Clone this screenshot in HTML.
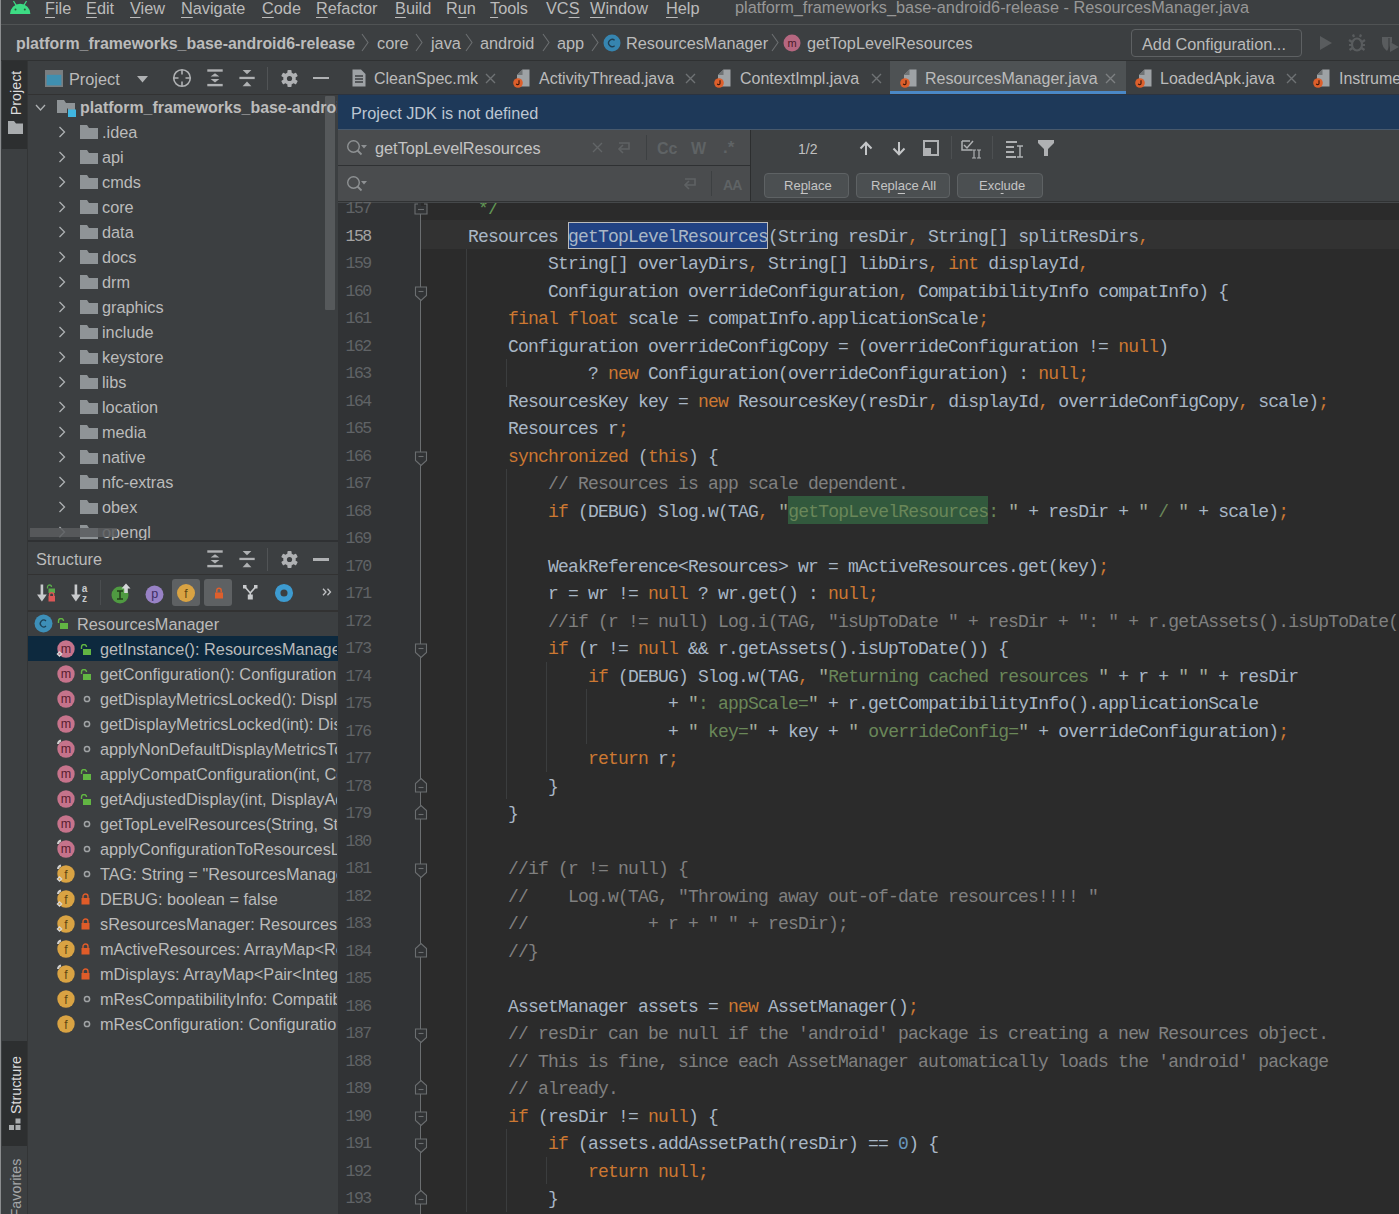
<!DOCTYPE html>
<html><head><meta charset="utf-8">
<style>
*{margin:0;padding:0;box-sizing:border-box}
html,body{width:1399px;height:1214px;overflow:hidden;background:#3c3f41}
body{position:relative;font-family:"Liberation Sans",sans-serif;font-size:16.3px;color:#bbbbbb}
.a{position:absolute}
.t{position:absolute;white-space:nowrap;margin-top:1.5px}
.mono{font-family:"Liberation Mono",monospace}
#menu .t{top:-4.5px;line-height:22px}
#menu u{text-decoration:underline;text-underline-offset:2.5px;text-decoration-thickness:1.2px}

.cl{position:absolute;left:8px;margin-top:2px;height:27.5px;line-height:27.5px;white-space:pre;font-family:"Liberation Mono",monospace;font-size:18px;letter-spacing:-0.8px;color:#a9b7c6}
.ln{position:absolute;right:50.5px;margin-top:1.2px;height:27.5px;line-height:27.5px;white-space:pre;font-family:"Liberation Mono",monospace;font-size:16.5px;letter-spacing:-1.6px;color:#606366;text-align:right}
.ln.cur{color:#a4a3a3}
.ig{position:absolute;width:1px;background:#3b3d3e}
.mn{text-decoration:underline;text-underline-offset:3px;text-decoration-thickness:1px}
</style></head><body>

<!-- MENU BAR -->
<div id="menu" class="a" style="left:0;top:0;width:1399px;height:24px;background:#3c3f41"><svg class="a" style="left:9px;top:0px" width="23" height="15"><path d="M1 14 A10.2 10.2 0 0 1 21.4 14 Z" fill="#3ddc84"/><path d="M4.5 1 L7.5 6 M17.5 1 L14.5 6" stroke="#3ddc84" stroke-width="1.3"/><circle cx="6.5" cy="9.5" r="1" fill="#2a5a3a"/><circle cx="15.8" cy="9.5" r="1" fill="#2a5a3a"/></svg>
  <div class="t" style="left:45px"><u>F</u>ile</div>
  <div class="t" style="left:86px"><u>E</u>dit</div>
  <div class="t" style="left:130px"><u>V</u>iew</div>
  <div class="t" style="left:181px"><u>N</u>avigate</div>
  <div class="t" style="left:262px"><u>C</u>ode</div>
  <div class="t" style="left:316px"><u>R</u>efactor</div>
  <div class="t" style="left:395px"><u>B</u>uild</div>
  <div class="t" style="left:446px">R<u>u</u>n</div>
  <div class="t" style="left:490px"><u>T</u>ools</div>
  <div class="t" style="left:546px">VC<u>S</u></div>
  <div class="t" style="left:590px"><u>W</u>indow</div>
  <div class="t" style="left:666px"><u>H</u>elp</div>
  <div class="t" style="left:735px;color:#979797;margin-top:0.2px">platform_frameworks_base-android6-release - ResourcesManager.java</div>
</div>
<div class="a" style="left:0;top:24px;width:1399px;height:1px;background:#505354"></div>

<!-- NAV BAR -->
<div id="nav" class="a" style="left:0;top:25px;width:1399px;height:35px;background:#3c3f41">
  <div class="t" style="left:16px;top:5px;line-height:24px;font-weight:bold;font-size:15.9px">platform_frameworks_base-android6-release</div>
  <svg class="a" style="left:360px;top:8px" width="10" height="19"><path d="M2 1 L8 9.5 L2 18" fill="none" stroke="#6b6e70" stroke-width="1.1"/></svg>
  <div class="t" style="left:377px;top:4px;line-height:24px">core</div>
  <svg class="a" style="left:414px;top:8px" width="10" height="19"><path d="M2 1 L8 9.5 L2 18" fill="none" stroke="#6b6e70" stroke-width="1.1"/></svg>
  <div class="t" style="left:431px;top:4px;line-height:24px">java</div>
  <svg class="a" style="left:464px;top:8px" width="10" height="19"><path d="M2 1 L8 9.5 L2 18" fill="none" stroke="#6b6e70" stroke-width="1.1"/></svg>
  <div class="t" style="left:480px;top:4px;line-height:24px">android</div>
  <svg class="a" style="left:541px;top:8px" width="10" height="19"><path d="M2 1 L8 9.5 L2 18" fill="none" stroke="#6b6e70" stroke-width="1.1"/></svg>
  <div class="t" style="left:557px;top:4px;line-height:24px">app</div>
  <svg class="a" style="left:590px;top:8px" width="10" height="19"><path d="M2 1 L8 9.5 L2 18" fill="none" stroke="#6b6e70" stroke-width="1.1"/></svg>
  <svg class="a" style="left:603px;top:9px" width="18" height="18"><circle cx="9" cy="9" r="8.5" fill="#3592c4" opacity="0.85"/><path d="M11.6 6.3 A3.6 3.6 0 1 0 11.6 11.7" fill="none" stroke="#1f3e52" stroke-width="1.3"/></svg>
  <div class="t" style="left:626px;top:4px;line-height:24px">ResourcesManager</div>
  <svg class="a" style="left:770px;top:8px" width="10" height="19"><path d="M2 1 L8 9.5 L2 18" fill="none" stroke="#6b6e70" stroke-width="1.1"/></svg>
  <svg class="a" style="left:783px;top:9px" width="18" height="18"><circle cx="9" cy="9" r="8.5" fill="#c36c87" opacity="0.9"/><text x="9" y="13" font-family="Liberation Sans" font-size="11" fill="#4a1a2a" text-anchor="middle">m</text></svg>
  <div class="t" style="left:807px;top:4px;line-height:24px">getTopLevelResources</div>
  <div class="a" style="left:1131px;top:4px;width:171px;height:28px;border:1px solid #5e6163;border-radius:4px"></div>
  <div class="t" style="left:1142px;top:5px;line-height:24px">Add Configuration...</div>
  <svg class="a" style="left:1318px;top:9px" width="16" height="18"><path d="M2 2 L14 9 L2 16 Z" fill="#595c5e"/></svg>
  <svg class="a" style="left:1348px;top:8px" width="18" height="20"><g fill="none" stroke="#595c5e" stroke-width="2.2"><ellipse cx="9" cy="11.5" rx="5" ry="6"/><path d="M1 7 L4 9 M17 7 L14 9 M1 12 H4 M17 12 H14 M1.5 17 L4.5 15 M16.5 17 L13.5 15 M6 4 L5 1.5 M12 4 L13 1.5"/></g><path d="M6 10 H12 M6 13.5 H12" stroke="#3c3f41" stroke-width="1.5"/></svg>
  <svg class="a" style="left:1381px;top:10px" width="18" height="18"><path d="M1 2 H11 V7 L6 16 Q1 12 1 7 Z" fill="#595c5e"/><path d="M9 7 L18 12 L9 17 Z" fill="#595c5e"/><path d="M8 3 V15" stroke="#3c3f41" stroke-width="1.2"/></svg>
</div>
<div class="a" style="left:0;top:60px;width:1399px;height:1.3px;background:#2f3132"></div>

<!-- LEFT STRIP -->
<div class="a" style="left:0;top:61px;width:28px;height:1153px;background:#3c3f41"></div>
<div class="a" style="left:0;top:0;width:1.2px;height:1214px;background:#8b8d8f;z-index:5"></div>
<div class="a" style="left:1.5px;top:61px;width:26px;height:88px;background:#2d2f30"></div>
<div class="a" style="left:1.5px;top:1041px;width:26px;height:105px;background:#2d2f30"></div>
<div class="a" style="left:27px;top:61px;width:1px;height:1153px;background:#333536"></div>
<div class="t" style="left:-14px;top:81px;width:60px;height:20px;line-height:20px;text-align:center;font-size:14.3px;color:#dddddd;transform:rotate(-90deg)">Project</div>
<svg class="a" style="left:8px;top:121px" width="15" height="13"><path d="M0 0 H6 L8 2.5 H15 V13 H0 Z" fill="#a9acae"/></svg>
<div class="t" style="left:-19px;top:1073px;width:70px;height:20px;line-height:20px;text-align:center;font-size:14.3px;color:#dddddd;transform:rotate(-90deg)">Structure</div>
<svg class="a" style="left:9px;top:1118px" width="13" height="13"><g fill="#a9acae"><rect x="0" y="7" width="5" height="5"/><rect x="6.5" y="7" width="5" height="5"/><rect x="6.5" y="0.5" width="5" height="5"/></g></svg>
<div class="t" style="left:-19px;top:1176px;width:70px;height:20px;line-height:20px;text-align:center;font-size:14.3px;color:#a4a6a8;transform:rotate(-90deg)">Favorites</div>

<!-- PROJECT PANEL -->
<div id="proj" class="a" style="left:28px;top:61px;width:310px;height:479px;background:#3c3f41;overflow:hidden">
  <svg class="a" style="left:17px;top:9px" width="18" height="17"><rect x="0.8" y="0.8" width="16.4" height="15.4" fill="#3f8fb0" stroke="#7a7e80" stroke-width="1.6"/><rect x="0.8" y="0.8" width="16.4" height="4" fill="#7a7e80"/></svg>
  <div class="t" style="left:41px;top:4px;line-height:24px">Project</div>
  <svg class="a" style="left:109px;top:15px" width="11" height="7"><path d="M0 0 H11 L5.5 6.5 Z" fill="#afb1b3"/></svg>
  <svg class="a" style="left:144px;top:7px" width="20" height="20"><circle cx="10" cy="10" r="8.3" fill="none" stroke="#afb1b3" stroke-width="1.6"/><path d="M10 2 V6.5 M10 13.5 V18 M2 10 H6.5 M13.5 10 H18" stroke="#afb1b3" stroke-width="1.6"/></svg>
  <svg class="a" style="left:179px;top:8px" width="17" height="20"><g fill="#afb1b3"><rect x="0.3" y="0.3" width="15.4" height="2.4"/><rect x="0.3" y="14.9" width="15.4" height="2.4"/><path d="M3.6 7.6 L8 4.2 L12.4 7.6 Z"/><path d="M3.6 10 L8 13.5 L12.4 10 Z"/></g></svg>
  <svg class="a" style="left:211px;top:8px" width="17" height="20"><g fill="#afb1b3"><rect x="0.4" y="7.8" width="15.3" height="2.3"/><path d="M3.6 0.9 H12.4 L8 5.2 Z"/><path d="M3.6 17.3 H12.4 L8 12.5 Z"/></g></svg>
  <div class="a" style="left:239px;top:6px;width:1px;height:23px;background:#515456"></div>
  <svg class="a" style="left:253px;top:9px" width="17" height="17"><g fill="#afb1b3"><circle cx="8.5" cy="8.5" r="6.2"/><rect x="6.4" y="0" width="4.2" height="17" rx="1" transform="rotate(0 8.5 8.5)"/><rect x="6.4" y="0" width="4.2" height="17" rx="1" transform="rotate(60 8.5 8.5)"/><rect x="6.4" y="0" width="4.2" height="17" rx="1" transform="rotate(120 8.5 8.5)"/></g><circle cx="8.5" cy="8.5" r="2.6" fill="#3c3f41"/></svg>
  <div class="a" style="left:285px;top:15.5px;width:15.5px;height:2.5px;background:#afb1b3"></div>
  <div class="a" style="left:0;top:33px;width:310px;height:1px;background:#323232"></div>
  <svg class="a" style="left:7px;top:43px" width="11" height="8"><path d="M1 1 L5.5 6 L10 1" fill="none" stroke="#aeb1b3" stroke-width="1.3"/></svg>
  <svg class="a" style="left:29px;top:39px" width="20" height="18"><path d="M0 0 H7 L9 3 H18 V13 H0 Z" fill="#8f9497"/><rect x="11" y="9.5" width="8" height="7.5" fill="#40b6e0"/><rect x="10" y="8.5" width="1" height="9" fill="#3c3f41"/></svg>
  <div class="t" style="left:52px;top:33px;line-height:24px;font-weight:bold;font-size:15.9px;width:257px;overflow:hidden;z-index:2">platform_frameworks_base-android6-release</div>
<svg class="a" style="left:30px;top:65px" width="8" height="12"><path d="M1.5 1 L6.5 6 L1.5 11" fill="none" stroke="#aeb1b3" stroke-width="1.3"/></svg><svg class="a" style="left:52px;top:64px" width="18" height="14"><path d="M0 0 H7 L9 3 H18 V14 H0 Z" fill="#8f9497"/></svg><div class="t" style="left:74px;top:57px;line-height:24px">.idea</div>
<svg class="a" style="left:30px;top:90px" width="8" height="12"><path d="M1.5 1 L6.5 6 L1.5 11" fill="none" stroke="#aeb1b3" stroke-width="1.3"/></svg><svg class="a" style="left:52px;top:89px" width="18" height="14"><path d="M0 0 H7 L9 3 H18 V14 H0 Z" fill="#8f9497"/></svg><div class="t" style="left:74px;top:82px;line-height:24px">api</div>
<svg class="a" style="left:30px;top:115px" width="8" height="12"><path d="M1.5 1 L6.5 6 L1.5 11" fill="none" stroke="#aeb1b3" stroke-width="1.3"/></svg><svg class="a" style="left:52px;top:114px" width="18" height="14"><path d="M0 0 H7 L9 3 H18 V14 H0 Z" fill="#8f9497"/></svg><div class="t" style="left:74px;top:107px;line-height:24px">cmds</div>
<svg class="a" style="left:30px;top:140px" width="8" height="12"><path d="M1.5 1 L6.5 6 L1.5 11" fill="none" stroke="#aeb1b3" stroke-width="1.3"/></svg><svg class="a" style="left:52px;top:139px" width="18" height="14"><path d="M0 0 H7 L9 3 H18 V14 H0 Z" fill="#8f9497"/></svg><div class="t" style="left:74px;top:132px;line-height:24px">core</div>
<svg class="a" style="left:30px;top:165px" width="8" height="12"><path d="M1.5 1 L6.5 6 L1.5 11" fill="none" stroke="#aeb1b3" stroke-width="1.3"/></svg><svg class="a" style="left:52px;top:164px" width="18" height="14"><path d="M0 0 H7 L9 3 H18 V14 H0 Z" fill="#8f9497"/></svg><div class="t" style="left:74px;top:157px;line-height:24px">data</div>
<svg class="a" style="left:30px;top:190px" width="8" height="12"><path d="M1.5 1 L6.5 6 L1.5 11" fill="none" stroke="#aeb1b3" stroke-width="1.3"/></svg><svg class="a" style="left:52px;top:189px" width="18" height="14"><path d="M0 0 H7 L9 3 H18 V14 H0 Z" fill="#8f9497"/></svg><div class="t" style="left:74px;top:182px;line-height:24px">docs</div>
<svg class="a" style="left:30px;top:215px" width="8" height="12"><path d="M1.5 1 L6.5 6 L1.5 11" fill="none" stroke="#aeb1b3" stroke-width="1.3"/></svg><svg class="a" style="left:52px;top:214px" width="18" height="14"><path d="M0 0 H7 L9 3 H18 V14 H0 Z" fill="#8f9497"/></svg><div class="t" style="left:74px;top:207px;line-height:24px">drm</div>
<svg class="a" style="left:30px;top:240px" width="8" height="12"><path d="M1.5 1 L6.5 6 L1.5 11" fill="none" stroke="#aeb1b3" stroke-width="1.3"/></svg><svg class="a" style="left:52px;top:239px" width="18" height="14"><path d="M0 0 H7 L9 3 H18 V14 H0 Z" fill="#8f9497"/></svg><div class="t" style="left:74px;top:232px;line-height:24px">graphics</div>
<svg class="a" style="left:30px;top:265px" width="8" height="12"><path d="M1.5 1 L6.5 6 L1.5 11" fill="none" stroke="#aeb1b3" stroke-width="1.3"/></svg><svg class="a" style="left:52px;top:264px" width="18" height="14"><path d="M0 0 H7 L9 3 H18 V14 H0 Z" fill="#8f9497"/></svg><div class="t" style="left:74px;top:257px;line-height:24px">include</div>
<svg class="a" style="left:30px;top:290px" width="8" height="12"><path d="M1.5 1 L6.5 6 L1.5 11" fill="none" stroke="#aeb1b3" stroke-width="1.3"/></svg><svg class="a" style="left:52px;top:289px" width="18" height="14"><path d="M0 0 H7 L9 3 H18 V14 H0 Z" fill="#8f9497"/></svg><div class="t" style="left:74px;top:282px;line-height:24px">keystore</div>
<svg class="a" style="left:30px;top:315px" width="8" height="12"><path d="M1.5 1 L6.5 6 L1.5 11" fill="none" stroke="#aeb1b3" stroke-width="1.3"/></svg><svg class="a" style="left:52px;top:314px" width="18" height="14"><path d="M0 0 H7 L9 3 H18 V14 H0 Z" fill="#8f9497"/></svg><div class="t" style="left:74px;top:307px;line-height:24px">libs</div>
<svg class="a" style="left:30px;top:340px" width="8" height="12"><path d="M1.5 1 L6.5 6 L1.5 11" fill="none" stroke="#aeb1b3" stroke-width="1.3"/></svg><svg class="a" style="left:52px;top:339px" width="18" height="14"><path d="M0 0 H7 L9 3 H18 V14 H0 Z" fill="#8f9497"/></svg><div class="t" style="left:74px;top:332px;line-height:24px">location</div>
<svg class="a" style="left:30px;top:365px" width="8" height="12"><path d="M1.5 1 L6.5 6 L1.5 11" fill="none" stroke="#aeb1b3" stroke-width="1.3"/></svg><svg class="a" style="left:52px;top:364px" width="18" height="14"><path d="M0 0 H7 L9 3 H18 V14 H0 Z" fill="#8f9497"/></svg><div class="t" style="left:74px;top:357px;line-height:24px">media</div>
<svg class="a" style="left:30px;top:390px" width="8" height="12"><path d="M1.5 1 L6.5 6 L1.5 11" fill="none" stroke="#aeb1b3" stroke-width="1.3"/></svg><svg class="a" style="left:52px;top:389px" width="18" height="14"><path d="M0 0 H7 L9 3 H18 V14 H0 Z" fill="#8f9497"/></svg><div class="t" style="left:74px;top:382px;line-height:24px">native</div>
<svg class="a" style="left:30px;top:415px" width="8" height="12"><path d="M1.5 1 L6.5 6 L1.5 11" fill="none" stroke="#aeb1b3" stroke-width="1.3"/></svg><svg class="a" style="left:52px;top:414px" width="18" height="14"><path d="M0 0 H7 L9 3 H18 V14 H0 Z" fill="#8f9497"/></svg><div class="t" style="left:74px;top:407px;line-height:24px">nfc-extras</div>
<svg class="a" style="left:30px;top:440px" width="8" height="12"><path d="M1.5 1 L6.5 6 L1.5 11" fill="none" stroke="#aeb1b3" stroke-width="1.3"/></svg><svg class="a" style="left:52px;top:439px" width="18" height="14"><path d="M0 0 H7 L9 3 H18 V14 H0 Z" fill="#8f9497"/></svg><div class="t" style="left:74px;top:432px;line-height:24px">obex</div>
<svg class="a" style="left:30px;top:465px" width="8" height="12"><path d="M1.5 1 L6.5 6 L1.5 11" fill="none" stroke="#aeb1b3" stroke-width="1.3"/></svg><svg class="a" style="left:52px;top:464px" width="18" height="14"><path d="M0 0 H7 L9 3 H18 V14 H0 Z" fill="#8f9497"/></svg><div class="t" style="left:74px;top:457px;line-height:24px">opengl</div>
<div class="a" style="left:297px;top:35px;width:10px;height:214px;background:#56595b;border-radius:1px"></div>
<div class="a" style="left:2px;top:467px;width:87px;height:9px;background:#5b5d5f;opacity:0.85;z-index:3"></div>
</div>

<!-- STRUCTURE PANEL -->
<div class="a" style="left:28px;top:540px;width:310px;height:1.6px;background:#2f3133"></div>
<div id="struct" class="a" style="left:28px;top:543px;width:310px;height:671px;background:#3c3f41;overflow:hidden">
  
  <div class="t" style="left:8px;top:2.5px;line-height:24px">Structure</div>
  <svg class="a" style="left:179px;top:7px" width="17" height="20"><g fill="#afb1b3"><rect x="0.3" y="0.3" width="15.4" height="2.4"/><rect x="0.3" y="14.9" width="15.4" height="2.4"/><path d="M3.6 7.6 L8 4.2 L12.4 7.6 Z"/><path d="M3.6 10 L8 13.5 L12.4 10 Z"/></g></svg>
  <svg class="a" style="left:211px;top:7px" width="17" height="20"><g fill="#afb1b3"><rect x="0.4" y="7.8" width="15.3" height="2.3"/><path d="M3.6 0.9 H12.4 L8 5.2 Z"/><path d="M3.6 17.3 H12.4 L8 12.5 Z"/></g></svg>
  <div class="a" style="left:239px;top:5px;width:1px;height:23px;background:#515456"></div>
  <svg class="a" style="left:253px;top:8px" width="17" height="17"><g fill="#afb1b3"><circle cx="8.5" cy="8.5" r="6.2"/><rect x="6.4" y="0" width="4.2" height="17" rx="1" transform="rotate(0 8.5 8.5)"/><rect x="6.4" y="0" width="4.2" height="17" rx="1" transform="rotate(60 8.5 8.5)"/><rect x="6.4" y="0" width="4.2" height="17" rx="1" transform="rotate(120 8.5 8.5)"/></g><circle cx="8.5" cy="8.5" r="2.6" fill="#3c3f41"/></svg>
  <div class="a" style="left:285px;top:15px;width:16px;height:2.5px;background:#afb1b3"></div>
  <div class="a" style="left:0;top:31px;width:310px;height:1px;background:#323232"></div>
  <!-- toolbar -->
  <svg class="a" style="left:9px;top:41px" width="20" height="19"><g fill="#c8cacc"><rect x="3.6" y="0.5" width="2.6" height="11"/><path d="M0 10.5 L9.8 10.5 L4.9 17.5 Z"/></g><path d="M10.5 4.5 V3 A2 2 0 0 1 14.5 3" fill="none" stroke="#59a84b" stroke-width="1.3"/><rect x="11.5" y="4.5" width="6.5" height="4.5" fill="#59a84b"/><path d="M12.5 12 V10.8 A2.1 2.1 0 0 1 16.7 10.8 V12" fill="none" stroke="#db5757" stroke-width="1.4"/><rect x="11.5" y="12" width="6.5" height="5.5" fill="#db5757"/></svg>
  <svg class="a" style="left:43px;top:41px" width="18" height="19"><g fill="#c8cacc"><rect x="3.6" y="0.5" width="2.6" height="11"/><path d="M0 10.5 L9.8 10.5 L4.9 17.5 Z"/></g><text x="13.5" y="8" font-family="Liberation Sans" font-weight="bold" font-size="10" fill="#c8cacc" text-anchor="middle">a</text><text x="13.5" y="17.5" font-family="Liberation Sans" font-weight="bold" font-size="10" fill="#c8cacc" text-anchor="middle">z</text></svg>
  <div class="a" style="left:72px;top:37px;width:1px;height:25px;background:#4a4d4f"></div>
  <svg class="a" style="left:83px;top:40px" width="20" height="21"><circle cx="9" cy="12" r="8.5" fill="#4f9a41"/><path d="M6 8 H12 M9 8 V16 M6 16 H12" stroke="#23401a" stroke-width="1.5"/><path d="M15 0.5 L19.5 5.5 H16.8 V10 H13.2 V5.5 H10.5 Z" fill="#d4d6d8"/></svg>
  <svg class="a" style="left:117px;top:42px" width="19" height="19"><circle cx="9.5" cy="9.5" r="9" fill="#9882c6"/><text x="9.8" y="13.3" font-family="Liberation Sans" font-size="12.5" fill="#3e2d63" text-anchor="middle">p</text></svg>
  <div class="a" style="left:144px;top:36px;width:28px;height:27px;background:#5e6163;border-radius:3px"></div>
  <svg class="a" style="left:148px;top:40px" width="20" height="20"><circle cx="10" cy="10" r="9" fill="#d9a343"/><text x="10" y="14.5" font-family="Liberation Sans" font-size="12" fill="#5e4512" text-anchor="middle">f</text></svg>
  <div class="a" style="left:176px;top:36px;width:28px;height:27px;background:#5e6163;border-radius:3px"></div>
  <svg class="a" style="left:186px;top:44px" width="10" height="12"><path d="M2.8 5.5 V3.5 A2.2 2.2 0 0 1 7.2 3.5 V5.5" fill="none" stroke="#de5f2c" stroke-width="1.5"/><rect x="1" y="5.5" width="8" height="6" fill="#de5f2c"/></svg>
  <svg class="a" style="left:215px;top:42px" width="15" height="15"><g fill="#c8cacc"><rect x="0" y="0" width="3.5" height="3.5"/><rect x="11" y="0" width="3.5" height="3.5"/><rect x="4.8" y="9.5" width="5" height="5"/></g><path d="M2 2 L7.25 8 L12.5 2 M7.25 8 V10" fill="none" stroke="#c8cacc" stroke-width="1.6"/></svg>
  <svg class="a" style="left:246px;top:40px" width="20" height="20"><circle cx="10" cy="10" r="6.3" fill="none" stroke="#3d9bd0" stroke-width="5.5"/></svg>
  <svg class="a" style="left:294px;top:45px" width="10" height="8"><path d="M1 0.8 L4 4 L1 7.2 M5.5 0.8 L8.5 4 L5.5 7.2" fill="none" stroke="#c0c2c4" stroke-width="1.3"/></svg>
  <div class="a" style="left:0;top:67px;width:310px;height:1.5px;background:#323232"></div>
  <!-- tree -->
  <svg class="a" style="left:6px;top:71px" width="19" height="19"><circle cx="9.5" cy="9.5" r="9" fill="#3d8fb8"/><path d="M12 7 A3.4 3.4 0 1 0 12 12" fill="none" stroke="#1c4156" stroke-width="1.3"/></svg>
  <svg class="a" style="left:29px;top:75px" width="11" height="11"><path d="M1.5 5 V3 A2.5 2.5 0 0 1 6.5 3" fill="none" stroke="#62b543" stroke-width="1.4"/><rect x="3" y="5" width="8" height="6" fill="#62b543"/></svg>
  <div class="t" style="left:49px;top:67px;line-height:24px">ResourcesManager</div>
  <div class="a" style="left:0;top:93px;width:310px;height:25px;background:#0d293e"></div>
<svg class="a" style="left:28px;top:96px" width="20" height="20"><circle cx="10" cy="10" r="8.7" fill="#c6738b"/><text x="10" y="14.2" font-family="Liberation Sans" font-size="12.5" fill="#561c2e" text-anchor="middle">m</text><path d="M3.5 12 L6.5 15 L3.5 18 L0.5 15 Z" fill="#d8d8d8"/><circle cx="3.5" cy="15" r="1" fill="#c6738b"/></svg><svg class="a" style="left:52px;top:101px" width="11" height="11"><path d="M1.5 5 V3 A2.5 2.5 0 0 1 6.5 3" fill="none" stroke="#62b543" stroke-width="1.4"/><rect x="3" y="5" width="8" height="6" fill="#62b543"/></svg><div class="t" style="left:72px;top:92px;line-height:24px;width:237px;overflow:hidden">getInstance(): ResourcesManager</div>
<svg class="a" style="left:28px;top:121px" width="20" height="20"><circle cx="10" cy="10" r="8.7" fill="#c6738b"/><text x="10" y="14.2" font-family="Liberation Sans" font-size="12.5" fill="#561c2e" text-anchor="middle">m</text></svg><svg class="a" style="left:52px;top:126px" width="11" height="11"><path d="M1.5 5 V3 A2.5 2.5 0 0 1 6.5 3" fill="none" stroke="#62b543" stroke-width="1.4"/><rect x="3" y="5" width="8" height="6" fill="#62b543"/></svg><div class="t" style="left:72px;top:117px;line-height:24px;width:237px;overflow:hidden">getConfiguration(): Configuration</div>
<svg class="a" style="left:28px;top:146px" width="20" height="20"><circle cx="10" cy="10" r="8.7" fill="#c6738b"/><text x="10" y="14.2" font-family="Liberation Sans" font-size="12.5" fill="#561c2e" text-anchor="middle">m</text></svg><svg class="a" style="left:55px;top:152px" width="8" height="8"><circle cx="4" cy="4" r="2.6" fill="none" stroke="#a0a3a5" stroke-width="1.5"/></svg><div class="t" style="left:72px;top:142px;line-height:24px;width:237px;overflow:hidden">getDisplayMetricsLocked(): DisplayMetrics</div>
<svg class="a" style="left:28px;top:171px" width="20" height="20"><circle cx="10" cy="10" r="8.7" fill="#c6738b"/><text x="10" y="14.2" font-family="Liberation Sans" font-size="12.5" fill="#561c2e" text-anchor="middle">m</text></svg><svg class="a" style="left:55px;top:177px" width="8" height="8"><circle cx="4" cy="4" r="2.6" fill="none" stroke="#a0a3a5" stroke-width="1.5"/></svg><div class="t" style="left:72px;top:167px;line-height:24px;width:237px;overflow:hidden">getDisplayMetricsLocked(int): DisplayMetrics</div>
<svg class="a" style="left:28px;top:196px" width="20" height="20"><circle cx="10" cy="10" r="8.7" fill="#c6738b"/><text x="10" y="14.2" font-family="Liberation Sans" font-size="12.5" fill="#561c2e" text-anchor="middle">m</text><path d="M2 5 A4 4 0 0 1 5 1.5" fill="none" stroke="#d0d0d0" stroke-width="2"/></svg><svg class="a" style="left:55px;top:202px" width="8" height="8"><circle cx="4" cy="4" r="2.6" fill="none" stroke="#a0a3a5" stroke-width="1.5"/></svg><div class="t" style="left:72px;top:192px;line-height:24px;width:237px;overflow:hidden">applyNonDefaultDisplayMetricsToConfiguration</div>
<svg class="a" style="left:28px;top:221px" width="20" height="20"><circle cx="10" cy="10" r="8.7" fill="#c6738b"/><text x="10" y="14.2" font-family="Liberation Sans" font-size="12.5" fill="#561c2e" text-anchor="middle">m</text></svg><svg class="a" style="left:52px;top:226px" width="11" height="11"><path d="M1.5 5 V3 A2.5 2.5 0 0 1 6.5 3" fill="none" stroke="#62b543" stroke-width="1.4"/><rect x="3" y="5" width="8" height="6" fill="#62b543"/></svg><div class="t" style="left:72px;top:217px;line-height:24px;width:237px;overflow:hidden">applyCompatConfiguration(int, Configuration)</div>
<svg class="a" style="left:28px;top:246px" width="20" height="20"><circle cx="10" cy="10" r="8.7" fill="#c6738b"/><text x="10" y="14.2" font-family="Liberation Sans" font-size="12.5" fill="#561c2e" text-anchor="middle">m</text></svg><svg class="a" style="left:52px;top:251px" width="11" height="11"><path d="M1.5 5 V3 A2.5 2.5 0 0 1 6.5 3" fill="none" stroke="#62b543" stroke-width="1.4"/><rect x="3" y="5" width="8" height="6" fill="#62b543"/></svg><div class="t" style="left:72px;top:242px;line-height:24px;width:237px;overflow:hidden">getAdjustedDisplay(int, DisplayAdjustments)</div>
<svg class="a" style="left:28px;top:271px" width="20" height="20"><circle cx="10" cy="10" r="8.7" fill="#c6738b"/><text x="10" y="14.2" font-family="Liberation Sans" font-size="12.5" fill="#561c2e" text-anchor="middle">m</text></svg><svg class="a" style="left:55px;top:277px" width="8" height="8"><circle cx="4" cy="4" r="2.6" fill="none" stroke="#a0a3a5" stroke-width="1.5"/></svg><div class="t" style="left:72px;top:267px;line-height:24px;width:237px;overflow:hidden">getTopLevelResources(String, String[]...)</div>
<svg class="a" style="left:28px;top:296px" width="20" height="20"><circle cx="10" cy="10" r="8.7" fill="#c6738b"/><text x="10" y="14.2" font-family="Liberation Sans" font-size="12.5" fill="#561c2e" text-anchor="middle">m</text><path d="M2 5 A4 4 0 0 1 5 1.5" fill="none" stroke="#d0d0d0" stroke-width="2"/></svg><svg class="a" style="left:55px;top:302px" width="8" height="8"><circle cx="4" cy="4" r="2.6" fill="none" stroke="#a0a3a5" stroke-width="1.5"/></svg><div class="t" style="left:72px;top:292px;line-height:24px;width:237px;overflow:hidden">applyConfigurationToResourcesLocked</div>
<svg class="a" style="left:28px;top:321px" width="20" height="20"><circle cx="10" cy="10" r="8.7" fill="#d9a343"/><text x="10" y="14.5" font-family="Liberation Sans" font-size="12" fill="#5e4512" text-anchor="middle">f</text><path d="M3.5 12 L6.5 15 L3.5 18 L0.5 15 Z" fill="#d8d8d8"/><circle cx="3.5" cy="15" r="1" fill="#d9a343"/><path d="M2 5 A4 4 0 0 1 5 1.5" fill="none" stroke="#d0d0d0" stroke-width="2"/></svg><svg class="a" style="left:55px;top:327px" width="8" height="8"><circle cx="4" cy="4" r="2.6" fill="none" stroke="#a0a3a5" stroke-width="1.5"/></svg><div class="t" style="left:72px;top:317px;line-height:24px;width:237px;overflow:hidden">TAG: String = "ResourcesManager"</div>
<svg class="a" style="left:28px;top:346px" width="20" height="20"><circle cx="10" cy="10" r="8.7" fill="#d9a343"/><text x="10" y="14.5" font-family="Liberation Sans" font-size="12" fill="#5e4512" text-anchor="middle">f</text><path d="M3.5 12 L6.5 15 L3.5 18 L0.5 15 Z" fill="#d8d8d8"/><circle cx="3.5" cy="15" r="1" fill="#d9a343"/><path d="M2 5 A4 4 0 0 1 5 1.5" fill="none" stroke="#d0d0d0" stroke-width="2"/></svg><svg class="a" style="left:52px;top:350px" width="11" height="12"><path d="M3 5 V3.5 A2.5 2.5 0 0 1 8 3.5 V5" fill="none" stroke="#e05c29" stroke-width="1.4"/><rect x="1.5" y="5" width="8" height="6.5" fill="#e05c29"/></svg><div class="t" style="left:72px;top:342px;line-height:24px;width:237px;overflow:hidden">DEBUG: boolean = false</div>
<svg class="a" style="left:28px;top:371px" width="20" height="20"><circle cx="10" cy="10" r="8.7" fill="#d9a343"/><text x="10" y="14.5" font-family="Liberation Sans" font-size="12" fill="#5e4512" text-anchor="middle">f</text><path d="M3.5 12 L6.5 15 L3.5 18 L0.5 15 Z" fill="#d8d8d8"/><circle cx="3.5" cy="15" r="1" fill="#d9a343"/></svg><svg class="a" style="left:52px;top:375px" width="11" height="12"><path d="M3 5 V3.5 A2.5 2.5 0 0 1 8 3.5 V5" fill="none" stroke="#e05c29" stroke-width="1.4"/><rect x="1.5" y="5" width="8" height="6.5" fill="#e05c29"/></svg><div class="t" style="left:72px;top:367px;line-height:24px;width:237px;overflow:hidden">sResourcesManager: ResourcesManager</div>
<svg class="a" style="left:28px;top:396px" width="20" height="20"><circle cx="10" cy="10" r="8.7" fill="#d9a343"/><text x="10" y="14.5" font-family="Liberation Sans" font-size="12" fill="#5e4512" text-anchor="middle">f</text><path d="M2 5 A4 4 0 0 1 5 1.5" fill="none" stroke="#d0d0d0" stroke-width="2"/></svg><svg class="a" style="left:52px;top:400px" width="11" height="12"><path d="M3 5 V3.5 A2.5 2.5 0 0 1 8 3.5 V5" fill="none" stroke="#e05c29" stroke-width="1.4"/><rect x="1.5" y="5" width="8" height="6.5" fill="#e05c29"/></svg><div class="t" style="left:72px;top:392px;line-height:24px;width:237px;overflow:hidden">mActiveResources: ArrayMap&lt;ResourcesKey&gt;</div>
<svg class="a" style="left:28px;top:421px" width="20" height="20"><circle cx="10" cy="10" r="8.7" fill="#d9a343"/><text x="10" y="14.5" font-family="Liberation Sans" font-size="12" fill="#5e4512" text-anchor="middle">f</text><path d="M2 5 A4 4 0 0 1 5 1.5" fill="none" stroke="#d0d0d0" stroke-width="2"/></svg><svg class="a" style="left:52px;top:425px" width="11" height="12"><path d="M3 5 V3.5 A2.5 2.5 0 0 1 8 3.5 V5" fill="none" stroke="#e05c29" stroke-width="1.4"/><rect x="1.5" y="5" width="8" height="6.5" fill="#e05c29"/></svg><div class="t" style="left:72px;top:417px;line-height:24px;width:237px;overflow:hidden">mDisplays: ArrayMap&lt;Pair&lt;Integer&gt;&gt;</div>
<svg class="a" style="left:28px;top:446px" width="20" height="20"><circle cx="10" cy="10" r="8.7" fill="#d9a343"/><text x="10" y="14.5" font-family="Liberation Sans" font-size="12" fill="#5e4512" text-anchor="middle">f</text></svg><svg class="a" style="left:55px;top:452px" width="8" height="8"><circle cx="4" cy="4" r="2.6" fill="none" stroke="#a0a3a5" stroke-width="1.5"/></svg><div class="t" style="left:72px;top:442px;line-height:24px;width:237px;overflow:hidden">mResCompatibilityInfo: CompatibilityInfo</div>
<svg class="a" style="left:28px;top:471px" width="20" height="20"><circle cx="10" cy="10" r="8.7" fill="#d9a343"/><text x="10" y="14.5" font-family="Liberation Sans" font-size="12" fill="#5e4512" text-anchor="middle">f</text></svg><svg class="a" style="left:55px;top:477px" width="8" height="8"><circle cx="4" cy="4" r="2.6" fill="none" stroke="#a0a3a5" stroke-width="1.5"/></svg><div class="t" style="left:72px;top:467px;line-height:24px;width:237px;overflow:hidden">mResConfiguration: Configuration</div>
</div>

<!-- EDITOR -->
<div id="tabs" class="a" style="left:338px;top:61px;width:1061px;height:33px;background:#3c3f41;overflow:hidden">
  <svg class="a" style="left:14px;top:8px" width="14" height="18"><path d="M0.5 0.5 H9 L13.5 5 V17.5 H0.5 Z" fill="#9ea2a5"/><path d="M3 7 H11 M3 10 H11 M3 13 H11" stroke="#3c3f41" stroke-width="1.3"/></svg>
  <div class="t" style="font-size:16px;left:36px;top:4px;line-height:24px">CleanSpec.mk</div>
  <svg class="a" style="left:147px;top:12px" width="11" height="11"><path d="M1 1 L10 10 M10 1 L1 10" stroke="#6f7274" stroke-width="1.4"/></svg>
  <svg class="a" style="left:175px;top:8px" width="18" height="19"><path d="M4 6 L9.5 0.5 H16.5 V17.5 H4 Z" fill="#9ea2a5"/><path d="M4 6 H9.5 V0.5 Z" fill="#6f7375"/><circle cx="5" cy="14" r="4.8" fill="#dd5f2b"/><path d="M6 11.3 V14.5 A1.4 1.4 0 0 1 3.3 14.8" fill="none" stroke="#40180a" stroke-width="1.2"/></svg>
  <div class="t" style="font-size:16px;left:201px;top:4px;line-height:24px">ActivityThread.java</div>
  <svg class="a" style="left:347px;top:12px" width="11" height="11"><path d="M1 1 L10 10 M10 1 L1 10" stroke="#6f7274" stroke-width="1.4"/></svg>
  <svg class="a" style="left:376px;top:8px" width="18" height="19"><path d="M4 6 L9.5 0.5 H16.5 V17.5 H4 Z" fill="#9ea2a5"/><path d="M4 6 H9.5 V0.5 Z" fill="#6f7375"/><circle cx="5" cy="14" r="4.8" fill="#dd5f2b"/><path d="M6 11.3 V14.5 A1.4 1.4 0 0 1 3.3 14.8" fill="none" stroke="#40180a" stroke-width="1.2"/></svg>
  <div class="t" style="font-size:16px;left:402px;top:4px;line-height:24px">ContextImpl.java</div>
  <svg class="a" style="left:533px;top:12px" width="11" height="11"><path d="M1 1 L10 10 M10 1 L1 10" stroke="#6f7274" stroke-width="1.4"/></svg>
  <div class="a" style="left:552px;top:0;width:236px;height:33px;background:#4e5254"></div>
  <div class="a" style="left:552px;top:30px;width:236px;height:3px;background:#4a88c7"></div>
  <svg class="a" style="left:562px;top:8px" width="18" height="19"><path d="M4 6 L9.5 0.5 H16.5 V17.5 H4 Z" fill="#9ea2a5"/><path d="M4 6 H9.5 V0.5 Z" fill="#6f7375"/><circle cx="5" cy="14" r="4.8" fill="#dd5f2b"/><path d="M6 11.3 V14.5 A1.4 1.4 0 0 1 3.3 14.8" fill="none" stroke="#40180a" stroke-width="1.2"/></svg>
  <div class="t" style="font-size:16px;left:587px;top:4px;line-height:24px">ResourcesManager.java</div>
  <svg class="a" style="left:767px;top:12px" width="11" height="11"><path d="M1 1 L10 10 M10 1 L1 10" stroke="#7d8082" stroke-width="1.4"/></svg>
  <svg class="a" style="left:797px;top:8px" width="18" height="19"><path d="M4 6 L9.5 0.5 H16.5 V17.5 H4 Z" fill="#9ea2a5"/><path d="M4 6 H9.5 V0.5 Z" fill="#6f7375"/><circle cx="5" cy="14" r="4.8" fill="#dd5f2b"/><path d="M6 11.3 V14.5 A1.4 1.4 0 0 1 3.3 14.8" fill="none" stroke="#40180a" stroke-width="1.2"/></svg>
  <div class="t" style="font-size:16px;left:822px;top:4px;line-height:24px">LoadedApk.java</div>
  <svg class="a" style="left:948px;top:12px" width="11" height="11"><path d="M1 1 L10 10 M10 1 L1 10" stroke="#6f7274" stroke-width="1.4"/></svg>
  <svg class="a" style="left:975px;top:8px" width="18" height="19"><path d="M4 6 L9.5 0.5 H16.5 V17.5 H4 Z" fill="#9ea2a5"/><path d="M4 6 H9.5 V0.5 Z" fill="#6f7375"/><circle cx="5" cy="14" r="4.8" fill="#dd5f2b"/><path d="M6 11.3 V14.5 A1.4 1.4 0 0 1 3.3 14.8" fill="none" stroke="#40180a" stroke-width="1.2"/></svg>
  <div class="t" style="font-size:16px;left:1001px;top:4px;line-height:24px">InstrumentationInfo.java</div>
</div>
<div id="notif" class="a" style="left:338px;top:94px;width:1061px;height:35px;background:#1e3959;border-top:1.2px solid #2b3340">
  <div class="t" style="left:13px;top:4.5px;line-height:24px;color:#bcc6d2">Project JDK is not defined</div>
  <div class="a" style="left:0;top:34px;width:1061px;height:1.3px;background:#48596c"></div>
</div>
<div id="find" class="a" style="left:338px;top:129.5px;width:1061px;height:73px;background:#45484a;overflow:hidden">
  <div class="a" style="left:0;top:0;width:412px;height:71px;background:#4a4c4e"></div>
  <div class="a" style="left:412px;top:0;width:649px;height:71px;background:#3f4244"></div>
  <div class="a" style="left:412px;top:0;width:1px;height:71px;background:#2c2e2f"></div>
  <div class="a" style="left:0;top:35.5px;width:412px;height:1px;background:#2f3133"></div>
  <div class="a" style="left:0;top:71px;width:1061px;height:1px;background:#303233"></div>
  <svg class="a" style="left:8px;top:9px" width="22" height="18"><circle cx="7.5" cy="7.5" r="5.8" fill="none" stroke="#8e9193" stroke-width="1.4"/><path d="M11.5 11.5 L15.5 15.5" stroke="#8e9193" stroke-width="1.8"/><path d="M15 6 H21 L18 9.5 Z" fill="#8e9193"/></svg>
  <div class="t" style="left:37px;top:5px;line-height:24px;color:#c4c4c4">getTopLevelResources</div>
  <svg class="a" style="left:254px;top:12px" width="11" height="11"><path d="M1 1 L10 10 M10 1 L1 10" stroke="#626567" stroke-width="1.4"/></svg>
  <svg class="a" style="left:278px;top:10px" width="17" height="15"><path d="M3 3 H13 V9 H4" fill="none" stroke="#5f6264" stroke-width="1.6"/><path d="M7 5 L3 9 L7 13" fill="none" stroke="#5f6264" stroke-width="1.6"/></svg>
  <div class="a" style="left:308px;top:5px;width:1px;height:25px;background:#3d4042"></div>
  <div class="t" style="left:319px;top:6px;line-height:24px;font-weight:bold;color:#5f6365;font-size:16px">Cc</div>
  <div class="t" style="left:353px;top:6px;line-height:24px;font-weight:bold;color:#5f6365;font-size:16px">W</div>
  <div class="t" style="left:385px;top:5px;line-height:24px;font-weight:bold;color:#5f6365;font-size:17px">.*</div>
  <svg class="a" style="left:8px;top:45px" width="22" height="18"><circle cx="7.5" cy="7.5" r="5.8" fill="none" stroke="#8e9193" stroke-width="1.4"/><path d="M11.5 11.5 L15.5 15.5" stroke="#8e9193" stroke-width="1.8"/><path d="M15 6 H21 L18 9.5 Z" fill="#8e9193"/></svg>
  <svg class="a" style="left:344px;top:46px" width="17" height="15"><path d="M3 3 H13 V9 H4" fill="none" stroke="#5f6264" stroke-width="1.6"/><path d="M7 5 L3 9 L7 13" fill="none" stroke="#5f6264" stroke-width="1.6"/></svg>
  <div class="a" style="left:373px;top:41px;width:1px;height:25px;background:#3d4042"></div>
  <div class="t" style="left:385px;top:42px;line-height:24px;color:#5f6365;font-size:14px;font-weight:bold;letter-spacing:-1px">A&#8202;A</div>
  <div class="t" style="left:460px;top:6px;line-height:24px;font-size:14px;color:#c0c0c0">1/2</div>
  <svg class="a" style="left:521px;top:11px" width="14" height="15"><path d="M7 14 V2 M1.5 7.5 L7 1.8 L12.5 7.5" fill="none" stroke="#c4c6c8" stroke-width="2"/></svg>
  <svg class="a" style="left:554px;top:11px" width="14" height="15"><path d="M7 1 V13 M1.5 7.5 L7 13.2 L12.5 7.5" fill="none" stroke="#c4c6c8" stroke-width="2"/></svg>
  <svg class="a" style="left:585px;top:10px" width="16" height="16"><rect x="1" y="1" width="14" height="14" fill="none" stroke="#afb1b3" stroke-width="2"/><rect x="1" y="8" width="7" height="7" fill="#afb1b3"/></svg>
  <div class="a" style="left:613px;top:6px;width:1px;height:23px;background:#4d5052"></div>
  <svg class="a" style="left:623px;top:9px" width="22" height="20"><path d="M1 2 H9 M1 2 V11 H11" fill="none" stroke="#afb1b3" stroke-width="1.5"/><path d="M3 6 L6 9 L12 2" fill="none" stroke="#afb1b3" stroke-width="1.5"/><path d="M11 11 H15 M13 11 V19 M11 19 H15 M16 11 H20 M18 11 V19 M16 19 H20" stroke="#afb1b3" stroke-width="1.2"/></svg>
  <div class="a" style="left:654px;top:6px;width:1px;height:23px;background:#4d5052"></div>
  <svg class="a" style="left:668px;top:10px" width="19" height="18"><path d="M0 2 H11 M0 7 H8 M0 12 H8 M0 17 H10" stroke="#afb1b3" stroke-width="2"/><path d="M11 6 H17 M14 6 V17 M11 17 H17" stroke="#afb1b3" stroke-width="1.5"/></svg>
  <svg class="a" style="left:700px;top:10px" width="16" height="16"><path d="M0 0 H16 V3 L10 9 V16 H6 V9 L0 3 Z" fill="#afb1b3"/></svg>
  <div class="a" style="left:426px;top:43px;width:85px;height:25px;background:#4b4f51;border:1px solid #5e6264;border-radius:4px"></div>
  <div class="t" style="left:446px;top:43px;line-height:24px;font-size:13px;color:#c4c4c4">Re<u class="mn">p</u>lace</div>
  <div class="a" style="left:518px;top:43px;width:94px;height:25px;background:#4b4f51;border:1px solid #5e6264;border-radius:4px"></div>
  <div class="t" style="left:533px;top:43px;line-height:24px;font-size:13px;color:#c4c4c4">Repl<u class="mn">a</u>ce All</div>
  <div class="a" style="left:619px;top:43px;width:86px;height:25px;background:#4b4f51;border:1px solid #5e6264;border-radius:4px"></div>
  <div class="t" style="left:641px;top:43px;line-height:24px;font-size:13px;color:#c4c4c4">Exc<u class="mn">l</u>ude</div>
</div>

<div id="code" class="a" style="left:420px;top:203px;width:979px;height:1011px;background:#2b2b2b;overflow:hidden">
<div class="a" style="left:0;top:16.5px;width:979px;height:29.5px;background:#323232"></div>
<div class="ig" style="left:46px;top:46.25px;height:962.5px"></div><div class="ig" style="left:86px;top:156.25px;height:27.5px"></div><div class="ig" style="left:86px;top:266.25px;height:330.0px"></div><div class="ig" style="left:126px;top:458.75px;height:110.0px"></div><div class="ig" style="left:166px;top:486.25px;height:55.0px"></div><div class="ig" style="left:86px;top:926.25px;height:82.5px"></div><div class="ig" style="left:126px;top:953.75px;height:27.5px"></div>
<div class="a" style="left:148px;top:18.5px;width:200px;height:27px;background:#214283;border:1px solid #bbbbbb"></div>
<div class="a" style="left:368px;top:293.25px;width:200px;height:27.5px;background:#32593d"></div>
<div class="cl" style="top:-8.75px">     <span style="color:#629755">*/</span></div>
<div class="cl" style="top:18.75px">    Resources getTopLevelResources(String resDir<span style="color:#cc7832">,</span> String[] splitResDirs<span style="color:#cc7832">,</span></div>
<div class="cl" style="top:46.25px">            String[] overlayDirs<span style="color:#cc7832">,</span> String[] libDirs<span style="color:#cc7832">,</span> <span style="color:#cc7832">int</span> displayId<span style="color:#cc7832">,</span></div>
<div class="cl" style="top:73.75px">            Configuration overrideConfiguration<span style="color:#cc7832">,</span> CompatibilityInfo compatInfo) {</div>
<div class="cl" style="top:101.25px">        <span style="color:#cc7832">final</span> <span style="color:#cc7832">float</span> scale = compatInfo.applicationScale<span style="color:#cc7832">;</span></div>
<div class="cl" style="top:128.75px">        Configuration overrideConfigCopy = (overrideConfiguration != <span style="color:#cc7832">null</span>)</div>
<div class="cl" style="top:156.25px">                ? <span style="color:#cc7832">new</span> Configuration(overrideConfiguration) : <span style="color:#cc7832">null;</span></div>
<div class="cl" style="top:183.75px">        ResourcesKey key = <span style="color:#cc7832">new</span> ResourcesKey(resDir<span style="color:#cc7832">,</span> displayId<span style="color:#cc7832">,</span> overrideConfigCopy<span style="color:#cc7832">,</span> scale)<span style="color:#cc7832">;</span></div>
<div class="cl" style="top:211.25px">        Resources r<span style="color:#cc7832">;</span></div>
<div class="cl" style="top:238.75px">        <span style="color:#cc7832">synchronized</span> (<span style="color:#cc7832">this</span>) {</div>
<div class="cl" style="top:266.25px">            <span style="color:#808080">// Resources is app scale dependent.</span></div>
<div class="cl" style="top:293.75px">            <span style="color:#cc7832">if</span> (DEBUG) Slog.w(TAG<span style="color:#cc7832">,</span> <span style="color:#a3ae9c">&quot;</span><span style="color:#6a8759">getTopLevelResources: </span><span style="color:#a3ae9c">&quot;</span> + resDir + <span style="color:#a3ae9c">&quot;</span><span style="color:#6a8759"> / </span><span style="color:#a3ae9c">&quot;</span> + scale)<span style="color:#cc7832">;</span></div>
<div class="cl" style="top:321.25px"></div>
<div class="cl" style="top:348.75px">            WeakReference&lt;Resources&gt; wr = mActiveResources.get(key)<span style="color:#cc7832">;</span></div>
<div class="cl" style="top:376.25px">            r = wr != <span style="color:#cc7832">null</span> ? wr.get() : <span style="color:#cc7832">null;</span></div>
<div class="cl" style="top:403.75px">            <span style="color:#808080">//if (r != null) Log.i(TAG, &quot;isUpToDate &quot; + resDir + &quot;: &quot; + r.getAssets().isUpToDate());</span></div>
<div class="cl" style="top:431.25px">            <span style="color:#cc7832">if</span> (r != <span style="color:#cc7832">null</span> &amp;&amp; r.getAssets().isUpToDate()) {</div>
<div class="cl" style="top:458.75px">                <span style="color:#cc7832">if</span> (DEBUG) Slog.w(TAG<span style="color:#cc7832">,</span> <span style="color:#a3ae9c">&quot;</span><span style="color:#6a8759">Returning cached resources </span><span style="color:#a3ae9c">&quot;</span> + r + <span style="color:#a3ae9c">&quot;</span><span style="color:#6a8759"> </span><span style="color:#a3ae9c">&quot;</span> + resDir</div>
<div class="cl" style="top:486.25px">                        + <span style="color:#a3ae9c">&quot;</span><span style="color:#6a8759">: appScale=</span><span style="color:#a3ae9c">&quot;</span> + r.getCompatibilityInfo().applicationScale</div>
<div class="cl" style="top:513.75px">                        + <span style="color:#a3ae9c">&quot;</span><span style="color:#6a8759"> key=</span><span style="color:#a3ae9c">&quot;</span> + key + <span style="color:#a3ae9c">&quot;</span><span style="color:#6a8759"> overrideConfig=</span><span style="color:#a3ae9c">&quot;</span> + overrideConfiguration)<span style="color:#cc7832">;</span></div>
<div class="cl" style="top:541.25px">                <span style="color:#cc7832">return</span> r<span style="color:#cc7832">;</span></div>
<div class="cl" style="top:568.75px">            }</div>
<div class="cl" style="top:596.25px">        }</div>
<div class="cl" style="top:623.75px"></div>
<div class="cl" style="top:651.25px">        <span style="color:#808080">//if (r != null) {</span></div>
<div class="cl" style="top:678.75px">        <span style="color:#808080">//    Log.w(TAG, &quot;Throwing away out-of-date resources!!!! &quot;</span></div>
<div class="cl" style="top:706.25px">        <span style="color:#808080">//            + r + &quot; &quot; + resDir);</span></div>
<div class="cl" style="top:733.75px">        <span style="color:#808080">//}</span></div>
<div class="cl" style="top:761.25px"></div>
<div class="cl" style="top:788.75px">        AssetManager assets = <span style="color:#cc7832">new</span> AssetManager()<span style="color:#cc7832">;</span></div>
<div class="cl" style="top:816.25px">        <span style="color:#808080">// resDir can be null if the &#x27;android&#x27; package is creating a new Resources object.</span></div>
<div class="cl" style="top:843.75px">        <span style="color:#808080">// This is fine, since each AssetManager automatically loads the &#x27;android&#x27; package</span></div>
<div class="cl" style="top:871.25px">        <span style="color:#808080">// already.</span></div>
<div class="cl" style="top:898.75px">        <span style="color:#cc7832">if</span> (resDir != <span style="color:#cc7832">null</span>) {</div>
<div class="cl" style="top:926.25px">            <span style="color:#cc7832">if</span> (assets.addAssetPath(resDir) == <span style="color:#6897bb">0</span>) {</div>
<div class="cl" style="top:953.75px">                <span style="color:#cc7832">return</span> <span style="color:#cc7832">null;</span></div>
<div class="cl" style="top:981.25px">            }</div></div>

<div id="gutter" class="a" style="left:338px;top:203px;width:83px;height:1011px;background:#313335"><div class="a" style="left:82px;top:11px;width:1px;height:1100px;background:#6b6e70"></div><svg class="a" style="left:76px;top:-1px" width="14" height="14"><path d="M1 4 V12 H13 V4 M1 4 V2 H4 M13 4 V2 H10" fill="#313335" stroke="#6b6e70" stroke-width="1.1"/><path d="M4 7.5 H10" stroke="#6b6e70" stroke-width="1.1"/></svg><svg class="a" style="left:76px;top:82.5px" width="14" height="17"><path d="M1.5 1 H12.5 V9.5 L7 14.5 L1.5 9.5 Z" fill="#313335" stroke="#6b6e70" stroke-width="1.1"/><path d="M4.5 5.5 H9.5" stroke="#6b6e70" stroke-width="1.1"/></svg><svg class="a" style="left:76px;top:247.5px" width="14" height="17"><path d="M1.5 1 H12.5 V9.5 L7 14.5 L1.5 9.5 Z" fill="#313335" stroke="#6b6e70" stroke-width="1.1"/><path d="M4.5 5.5 H9.5" stroke="#6b6e70" stroke-width="1.1"/></svg><svg class="a" style="left:76px;top:440px" width="14" height="17"><path d="M1.5 1 H12.5 V9.5 L7 14.5 L1.5 9.5 Z" fill="#313335" stroke="#6b6e70" stroke-width="1.1"/><path d="M4.5 5.5 H9.5" stroke="#6b6e70" stroke-width="1.1"/></svg><svg class="a" style="left:76px;top:660px" width="14" height="17"><path d="M1.5 1 H12.5 V9.5 L7 14.5 L1.5 9.5 Z" fill="#313335" stroke="#6b6e70" stroke-width="1.1"/><path d="M4.5 5.5 H9.5" stroke="#6b6e70" stroke-width="1.1"/></svg><svg class="a" style="left:76px;top:825px" width="14" height="17"><path d="M1.5 1 H12.5 V9.5 L7 14.5 L1.5 9.5 Z" fill="#313335" stroke="#6b6e70" stroke-width="1.1"/><path d="M4.5 5.5 H9.5" stroke="#6b6e70" stroke-width="1.1"/></svg><svg class="a" style="left:76px;top:907.5px" width="14" height="17"><path d="M1.5 1 H12.5 V9.5 L7 14.5 L1.5 9.5 Z" fill="#313335" stroke="#6b6e70" stroke-width="1.1"/><path d="M4.5 5.5 H9.5" stroke="#6b6e70" stroke-width="1.1"/></svg><svg class="a" style="left:76px;top:935px" width="14" height="17"><path d="M1.5 1 H12.5 V9.5 L7 14.5 L1.5 9.5 Z" fill="#313335" stroke="#6b6e70" stroke-width="1.1"/><path d="M4.5 5.5 H9.5" stroke="#6b6e70" stroke-width="1.1"/></svg><svg class="a" style="left:76px;top:572.5px" width="14" height="17"><path d="M1.5 16 H12.5 V7.5 L7 2.5 L1.5 7.5 Z" fill="#313335" stroke="#6b6e70" stroke-width="1.1"/><path d="M4.5 11.5 H9.5" stroke="#6b6e70" stroke-width="1.1"/></svg><svg class="a" style="left:76px;top:600px" width="14" height="17"><path d="M1.5 16 H12.5 V7.5 L7 2.5 L1.5 7.5 Z" fill="#313335" stroke="#6b6e70" stroke-width="1.1"/><path d="M4.5 11.5 H9.5" stroke="#6b6e70" stroke-width="1.1"/></svg><svg class="a" style="left:76px;top:737.5px" width="14" height="17"><path d="M1.5 16 H12.5 V7.5 L7 2.5 L1.5 7.5 Z" fill="#313335" stroke="#6b6e70" stroke-width="1.1"/><path d="M4.5 11.5 H9.5" stroke="#6b6e70" stroke-width="1.1"/></svg><svg class="a" style="left:76px;top:875px" width="14" height="17"><path d="M1.5 16 H12.5 V7.5 L7 2.5 L1.5 7.5 Z" fill="#313335" stroke="#6b6e70" stroke-width="1.1"/><path d="M4.5 11.5 H9.5" stroke="#6b6e70" stroke-width="1.1"/></svg><svg class="a" style="left:76px;top:985px" width="14" height="17"><path d="M1.5 16 H12.5 V7.5 L7 2.5 L1.5 7.5 Z" fill="#313335" stroke="#6b6e70" stroke-width="1.1"/><path d="M4.5 11.5 H9.5" stroke="#6b6e70" stroke-width="1.1"/></svg><div class="ln" style="top:-8.75px">157</div>
<div class="ln cur" style="top:18.75px">158</div>
<div class="ln" style="top:46.25px">159</div>
<div class="ln" style="top:73.75px">160</div>
<div class="ln" style="top:101.25px">161</div>
<div class="ln" style="top:128.75px">162</div>
<div class="ln" style="top:156.25px">163</div>
<div class="ln" style="top:183.75px">164</div>
<div class="ln" style="top:211.25px">165</div>
<div class="ln" style="top:238.75px">166</div>
<div class="ln" style="top:266.25px">167</div>
<div class="ln" style="top:293.75px">168</div>
<div class="ln" style="top:321.25px">169</div>
<div class="ln" style="top:348.75px">170</div>
<div class="ln" style="top:376.25px">171</div>
<div class="ln" style="top:403.75px">172</div>
<div class="ln" style="top:431.25px">173</div>
<div class="ln" style="top:458.75px">174</div>
<div class="ln" style="top:486.25px">175</div>
<div class="ln" style="top:513.75px">176</div>
<div class="ln" style="top:541.25px">177</div>
<div class="ln" style="top:568.75px">178</div>
<div class="ln" style="top:596.25px">179</div>
<div class="ln" style="top:623.75px">180</div>
<div class="ln" style="top:651.25px">181</div>
<div class="ln" style="top:678.75px">182</div>
<div class="ln" style="top:706.25px">183</div>
<div class="ln" style="top:733.75px">184</div>
<div class="ln" style="top:761.25px">185</div>
<div class="ln" style="top:788.75px">186</div>
<div class="ln" style="top:816.25px">187</div>
<div class="ln" style="top:843.75px">188</div>
<div class="ln" style="top:871.25px">189</div>
<div class="ln" style="top:898.75px">190</div>
<div class="ln" style="top:926.25px">191</div>
<div class="ln" style="top:953.75px">192</div>
<div class="ln" style="top:981.25px">193</div></div>
</body></html>
